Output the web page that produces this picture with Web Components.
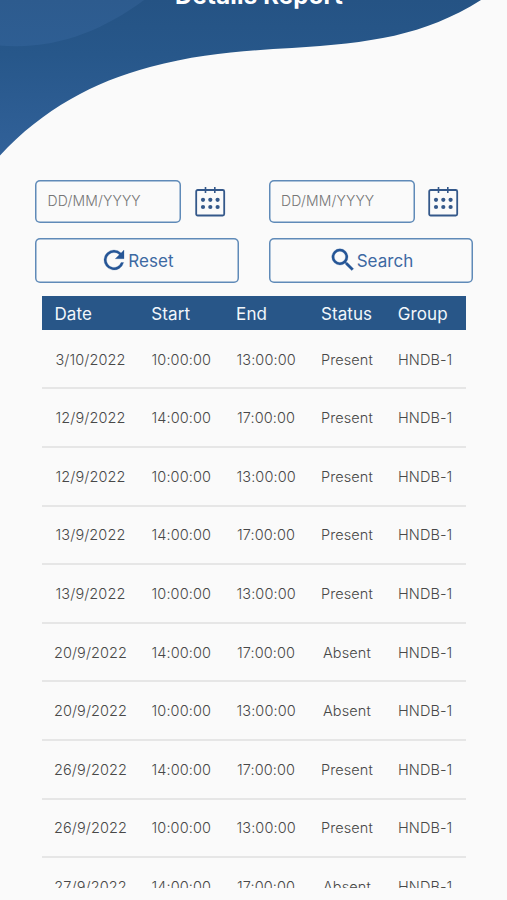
<!DOCTYPE html>
<html lang="en">
<head>
<meta charset="UTF-8">
<meta name="viewport" content="width=device-width, initial-scale=1.0">
<title>Details Report</title>
<style>
  body {
    margin: 0;
    background: #fafafa;
    font-family: Inter, "Liberation Sans", sans-serif;
    overflow: hidden;
  }
</style>
</head>
<body>
<report-page>
  <wave-header slot="header">Details Report</wave-header>
  <date-field slot="filters"></date-field>
  <date-field slot="filters"></date-field>
  <action-button slot="actions" icon="reset">Reset</action-button>
  <action-button slot="actions" icon="search">Search</action-button>
  <report-table></report-table>
</report-page>

<script>
class ReportPage extends HTMLElement {
    constructor() {
        super();
        this.attachShadow({ mode: "open" }).innerHTML = `
        <style>
          :host {
            display: flex;
            flex-direction: column;
            height: 900px;
            overflow: hidden;
          }
          .filters {
            display: grid;
            grid-template-columns: 204px 204px;
            column-gap: 29.5px;
            padding-left: 35px;
            margin-top: 20px;
          }
          .actions {
            display: grid;
            grid-template-columns: 204px 204px;
            column-gap: 30px;
            padding-left: 35px;
            margin: 15.5px 0 13px;
          }
        </style>
        <slot name="header"></slot>
        <div class="filters"><slot name="filters"></slot></div>
        <div class="actions"><slot name="actions"></slot></div>
        <slot></slot>`;
    }
}

class WaveHeader extends HTMLElement {
    constructor() {
        super();
        this.attachShadow({ mode: "open" }).innerHTML = `
        <style>
          :host {
            display: grid;
            height: 160px;
            overflow: hidden;
          }
          svg, .title {
            grid-area: 1 / 1;
          }
          .title {
            margin: -18px 0 0 175px;
            color: #fff;
            font-size: 24px;
            font-weight: 700;
            letter-spacing: 0.2px;
            line-height: 28px;
            white-space: nowrap;
          }
        </style>
        <svg width="507" height="160" viewBox="0 0 507 160">
          <defs>
            <linearGradient id="wave" x1="0" y1="0" x2="0" y2="1">
              <stop offset="0" stop-color="#255384"/>
              <stop offset="0.35" stop-color="#27578a"/>
              <stop offset="1" stop-color="#316199"/>
            </linearGradient>
            <linearGradient id="bubble" x1="0" y1="0" x2="0" y2="1">
              <stop offset="0" stop-color="#2d5b8e"/>
              <stop offset="1" stop-color="#2e5e93"/>
            </linearGradient>
          </defs>
          <path fill="url(#wave)" d="M0 0V155.500C43 109 94 82 150 67C202 53 248 50.500 292 48C370 43 424 36 481 0Z"/>
          <path fill="url(#bubble)" d="M0 0V45.500C55 50 102 31 144 0Z"/>
        </svg>
        <div class="title"><slot></slot></div>`;
    }
}

class DateField extends HTMLElement {
    constructor() {
        super();
        this.attachShadow({ mode: "open" }).innerHTML = `
        <style>
          :host {
            display: flex;
            align-items: center;
            gap: 13.5px;
          }
          .box {
            box-sizing: border-box;
            width: 146px;
            height: 42.500px;
            padding-left: 12.5px;
            box-shadow: inset 0 0 0 1.5px #5f8ab8;
            border-radius: 5px;
            color: #757575;
            font-size: 14px;
            font-weight: 300;
            letter-spacing: 0.15px;
            line-height: 42px;
          }
        </style>
        <div class="box">DD/MM/YYYY</div>
        <svg width="31" height="31" viewBox="0 0 31 31" fill="none" stroke="#34588a" stroke-width="1.8">
          <rect x="1.200" y="4" width="28" height="25.500" rx="1.500"/>
          <path d="M10.500 1v6M19.800 1v6" stroke-width="1.600"/>
          <g fill="#34588a" stroke="none">
            <circle cx="8" cy="13.800" r="2.100"/>
            <circle cx="15.300" cy="13.800" r="2.100"/>
            <circle cx="22.600" cy="13.800" r="2.100"/>
            <circle cx="8" cy="21" r="2.100"/>
            <circle cx="15.300" cy="21" r="2.100"/>
            <circle cx="22.600" cy="21" r="2.100"/>
          </g>
        </svg>`;
    }
}

const icons = {
    reset: `<path d="M17.650 6.350A7.960 7.960 0 0 0 12 4a8 8 0 1 0 7.730 10h-2.080A6 6 0 1 1 12 6c1.660 0 3.140.690 4.220 1.780L13 11h7V4z"/>`,
    search: `<path d="M15.500 14h-.790l-.280-.270A6.470 6.470 0 0 0 16 9.500 6.500 6.500 0 1 0 9.500 16c1.610 0 3.090-.590 4.230-1.570l.270.280v.790l5 4.990L20.490 19zm-6 0a4.500 4.500 0 1 1 0-9 4.500 4.500 0 0 1 0 9z"/>`
};

class ActionButton extends HTMLElement {
    constructor() {
        super();
        this.attachShadow({ mode: "open" });
    }

    connectedCallback() {
        this.shadowRoot.innerHTML = `
        <style>
          :host {
            display: flex;
            justify-content: center;
            align-items: center;
            box-sizing: border-box;
            height: 44.500px;
            padding: 2px 1px 0 0;
            box-shadow: inset 0 0 0 1.5px #5f8ab8;
            border-radius: 5px;
            color: #3d69a2;
            font-size: 17px;
            letter-spacing: 0.050px;
            line-height: 24px;
            cursor: pointer;
          }
          svg {
            width: 30px;
            height: 30px;
            margin: 0 -1px 3px 0;
            fill: #255596;
            stroke: #255596;
            stroke-width: 0.200;
          }
        </style>
        <svg viewBox="0 0 24 24">${icons[this.getAttribute("icon")]}</svg>
        <slot></slot>`;
    }
}

const rows = [
    ["3/10/2022", "10:00:00", "13:00:00", "Present", "HNDB-1"],
    ["12/9/2022", "14:00:00", "17:00:00", "Present", "HNDB-1"],
    ["12/9/2022", "10:00:00", "13:00:00", "Present", "HNDB-1"],
    ["13/9/2022", "14:00:00", "17:00:00", "Present", "HNDB-1"],
    ["13/9/2022", "10:00:00", "13:00:00", "Present", "HNDB-1"],
    ["20/9/2022", "14:00:00", "17:00:00", "Absent", "HNDB-1"],
    ["20/9/2022", "10:00:00", "13:00:00", "Absent", "HNDB-1"],
    ["26/9/2022", "14:00:00", "17:00:00", "Present", "HNDB-1"],
    ["26/9/2022", "10:00:00", "13:00:00", "Present", "HNDB-1"],
    ["27/9/2022", "14:00:00", "17:00:00", "Absent", "HNDB-1"]
];

class ReportTable extends HTMLElement {
    constructor() {
        super();
        const cells = (values) => values.map((value) => `<span>${value}</span>`).join("");
        this.attachShadow({ mode: "open" }).innerHTML = `
        <style>
          :host {
            display: block;
            width: 424px;
            height: 592px;
            margin-left: 42px;
            overflow: hidden;
          }
          .head, .row {
            display: grid;
            grid-template-columns: 72px 60px 60px 52px 55px;
            column-gap: 24.8px;
            align-items: center;
            box-sizing: border-box;
            padding-left: 12.5px;
            white-space: nowrap;
          }
          .head {
            height: 34.5px;
            padding-top: 2px;
            margin-bottom: 0.9px;
            background: #285688;
            color: #f2f6fb;
            font-size: 17px;
            letter-spacing: 0.1px;
          }
          .row {
            height: 58.600px;
            border-bottom: 2px solid #e6e6e6;
            color: #484848;
            font-size: 14.500px;
            font-weight: 300;
            letter-spacing: 0.1px;
          }
          .row span {
            justify-self: center;
          }
        </style>
        <div class="head">${cells(["Date", "Start", "End", "Status", "Group"])}</div>
        ${rows.map((row) => `<div class="row">${cells(row)}</div>`).join("")}`;
    }
}

customElements.define("report-page", ReportPage);
customElements.define("wave-header", WaveHeader);
customElements.define("date-field", DateField);
customElements.define("action-button", ActionButton);
customElements.define("report-table", ReportTable);
</script>
</body>
</html>
